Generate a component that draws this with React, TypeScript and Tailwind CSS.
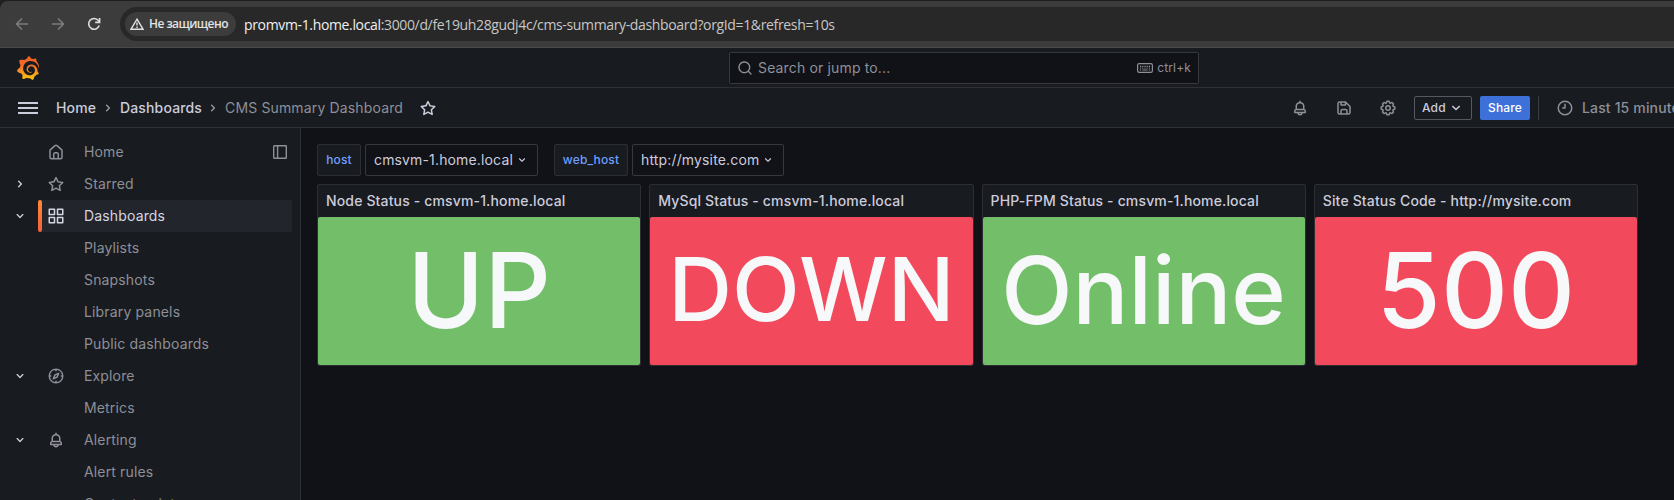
import React from 'react';
import { SiGrafana } from 'react-icons/si';

const ICONS = {
  search:
    'M21.71,20.29,18,16.61A9,9,0,1,0,16.61,18l3.68,3.68a1,1,0,0,0,1.42,0A1,1,0,0,0,21.71,20.29ZM11,18a7,7,0,1,1,7-7A7,7,0,0,1,11,18Z',
  bell: 'M18,13.18V10a6,6,0,0,0-5-5.91V3a1,1,0,0,0-2,0V4.09A6,6,0,0,0,6,10v3.18A3,3,0,0,0,4,16v2a1,1,0,0,0,1,1H8.14a4,4,0,0,0,7.72,0H19a1,1,0,0,0,1-1V16A3,3,0,0,0,18,13.18ZM8,10a4,4,0,0,1,8,0v3H8Zm4,10a2,2,0,0,1-1.72-1h3.44A2,2,0,0,1,12,20Zm6-3H6V16a1,1,0,0,1,1-1H17a1,1,0,0,1,1,1Z',
  down: 'M17,9.17a1,1,0,0,0-1.41,0L12,12.71,8.46,9.17a1,1,0,0,0-1.41,0,1,1,0,0,0,0,1.42l4.24,4.24a1,1,0,0,0,1.42,0L17,10.59A1,1,0,0,0,17,9.17Z',
  right:
    'M14.83,11.29,10.59,7.05a1,1,0,0,0-1.42,0,1,1,0,0,0,0,1.41L12.71,12,9.17,15.54a1,1,0,0,0,0,1.41,1,1,0,0,0,.71.29,1,1,0,0,0,.71-.29l4.24-4.24A1,1,0,0,0,14.83,11.29Z',
  home: 'M20,8h0L14,2.74a3,3,0,0,0-4,0L4,8a3,3,0,0,0-1,2.26V19a3,3,0,0,0,3,3H18a3,3,0,0,0,3-3V10.25A3,3,0,0,0,20,8ZM14,20H10V15a1,1,0,0,1,1-1h2a1,1,0,0,1,1,1Zm5-1a1,1,0,0,1-1,1H16V15a3,3,0,0,0-3-3H11a3,3,0,0,0-3,3v5H6a1,1,0,0,1-1-1V10.25a1,1,0,0,1,.34-.75l6-5.25a1,1,0,0,1,1.32,0l6,5.25a1,1,0,0,1,.34.75Z',
  apps: 'M10,13H3a1,1,0,0,0-1,1v7a1,1,0,0,0,1,1h7a1,1,0,0,0,1-1V14A1,1,0,0,0,10,13ZM9,20H4V15H9ZM21,2H14a1,1,0,0,0-1,1v7a1,1,0,0,0,1,1h7a1,1,0,0,0,1-1V3A1,1,0,0,0,21,2ZM20,9H15V4h5Zm1,4H14a1,1,0,0,0-1,1v7a1,1,0,0,0,1,1h7a1,1,0,0,0,1-1V14A1,1,0,0,0,21,13Zm-1,7H15V15h5ZM10,2H3A1,1,0,0,0,2,3v7a1,1,0,0,0,1,1h7a1,1,0,0,0,1-1V3A1,1,0,0,0,10,2ZM9,9H4V4H9Z',
  compass:
    'M12,2A10,10,0,1,0,22,12,10,10,0,0,0,12,2Zm1,17.93V19a1,1,0,0,0-2,0v.93A8,8,0,0,1,4.07,13H5a1,1,0,0,0,0-2H4.07A8,8,0,0,1,11,4.07V5a1,1,0,0,0,2,0V4.07A8,8,0,0,1,19.93,11H19a1,1,0,0,0,0,2h.93A8,8,0,0,1,13,19.93ZM15.14,7.55l-5,2.12a1,1,0,0,0-.52.52l-2.12,5a1,1,0,0,0,.21,1.1,1,1,0,0,0,.7.3.93.93,0,0,0,.4-.09l5-2.12a1,1,0,0,0,.52-.52l2.12-5a1,1,0,0,0-1.31-1.31Zm-2.49,5.1-2.28,1,1-2.28,2.28-1Z',
  save: 'M20.71,9.29l-6-6a1,1,0,0,0-.32-.21A1.09,1.09,0,0,0,14,3H6A3,3,0,0,0,3,6V18a3,3,0,0,0,3,3H18a3,3,0,0,0,3-3V10A1,1,0,0,0,20.71,9.29ZM9,5h4V7H9Zm6,14H9V16a1,1,0,0,1,1-1h4a1,1,0,0,1,1,1Zm4-1a1,1,0,0,1-1,1H17V16a3,3,0,0,0-3-3H10a3,3,0,0,0-3,3v3H6a1,1,0,0,1-1-1V6A1,1,0,0,1,6,5H7V8A1,1,0,0,0,8,9h6a1,1,0,0,0,1-1V6.41l4,4Z',
  star: 'M22,9.67A1,1,0,0,0,21.14,9l-5.69-.83L12.9,3a1,1,0,0,0-1.8,0L8.55,8.16,2.86,9a1,1,0,0,0-.81.68,1,1,0,0,0,.25,1l4.13,4-1,5.68A1,1,0,0,0,6.9,21.44L12,18.77l5.1,2.67a.93.93,0,0,0,.46.12,1,1,0,0,0,.59-.19,1,1,0,0,0,.4-1l-1-5.68,4.13-4A1,1,0,0,0,22,9.67Zm-6.15,4a1,1,0,0,0-.29.88l.72,4.2-3.76-2a1.06,1.06,0,0,0-.94,0l-3.76,2,.72-4.2a1,1,0,0,0-.29-.88l-3-3,4.21-.61a1,1,0,0,0,.76-.55L12,5.7l1.88,3.82a1,1,0,0,0,.76.55l4.21.61Z',
  clock: 'M12,2A10,10,0,1,0,22,12,10,10,0,0,0,12,2Zm0,18a8,8,0,1,1,8-8A8,8,0,0,1,12,20ZM12,6a1,1,0,0,0-1,1v4H9a1,1,0,0,0,0,2h3a1,1,0,0,0,1-1V7A1,1,0,0,0,12,6Z',
  cog: 'M21.32,9.55l-1.89-.63.89-1.78A1,1,0,0,0,20.13,6L18,3.87a1,1,0,0,0-1.15-.19l-1.78.89-.63-1.89A1,1,0,0,0,13.5,2h-3a1,1,0,0,0-.95.68L8.92,4.57,7.14,3.68A1,1,0,0,0,6,3.87L3.87,6a1,1,0,0,0-.19,1.15l.89,1.78-1.89.63A1,1,0,0,0,2,10.5v3a1,1,0,0,0,.68.95l1.89.63-.89,1.78A1,1,0,0,0,3.87,18L6,20.13a1,1,0,0,0,1.15.19l1.78-.89.63,1.89a1,1,0,0,0,.95.68h3a1,1,0,0,0,.95-.68l.63-1.89,1.78.89A1,1,0,0,0,18,20.13L20.13,18a1,1,0,0,0,.19-1.15l-.89-1.78,1.89-.63A1,1,0,0,0,22,13.5v-3A1,1,0,0,0,21.32,9.55ZM20,12.78l-1.2.4A2,2,0,0,0,17.64,16l.57,1.14-1.1,1.1L16,17.64a2,2,0,0,0-2.79,1.16l-.4,1.2H11.22l-.4-1.2A2,2,0,0,0,8,17.64l-1.14.57-1.1-1.1L6.36,16A2,2,0,0,0,5.2,13.18L4,12.78V11.22l1.2-.4A2,2,0,0,0,6.36,8L5.79,6.89l1.1-1.1L8,6.36A2,2,0,0,0,10.82,5.2l.4-1.2h1.56l.4,1.2A2,2,0,0,0,16,6.36l1.14-.57,1.1,1.1L17.64,8a2,2,0,0,0,1.16,2.79l1.2.4ZM12,8a4,4,0,1,0,4,4A4,4,0,0,0,12,8Zm0,6a2,2,0,1,1,2-2A2,2,0,0,1,12,14Z',
};

type IconName = keyof typeof ICONS;

function Icon({ name, className = 'size-4' }: { name: IconName; className?: string }) {
  return (
    <svg viewBox="0 0 24 24" fill="currentColor" className={`shrink-0 ${className}`}>
      <path d={ICONS[name]} />
    </svg>
  );
}

function BrowserBar() {
  return (
    <div className="h-12 shrink-0 bg-[#1f1f1f] pt-px">
      <div className="flex h-[47px] items-center rounded-tl-lg border-b border-[#4a4a49] bg-[#3c3c3c] pl-[15px]">
        <svg viewBox="0 0 14 14" className="size-3.5 shrink-0 text-[#7c7c7c]" fill="none" stroke="currentColor" strokeWidth="1.6">
          <path d="M13 7H2M7 1.5 1.5 7 7 12.5" />
        </svg>
        <svg viewBox="0 0 14 14" className="ml-[22px] size-3.5 shrink-0 text-[#7c7c7c]" fill="none" stroke="currentColor" strokeWidth="1.6">
          <path d="M1 7h11M7 1.5 12.5 7 7 12.5" />
        </svg>
        <svg viewBox="0 0 14 14" className="ml-[22px] size-3.5 shrink-0 text-[#dedede]" fill="none" stroke="currentColor" strokeWidth="1.6">
          <path d="M12.2 8.6A5.4 5.4 0 1 1 11.4 3.6L12.6 5" />
          <path d="M12.6 1v4.4H8.2" />
        </svg>
        <div className="ml-[19px] flex h-[34px] flex-1 items-center rounded-l-full bg-[#282828] pl-[5px] font-['Open_Sans',sans-serif]">
          <div className="flex h-6 w-[111px] shrink-0 items-center rounded-full bg-[#3c3c3c] pl-[5px]">
            <svg viewBox="0 0 14 12" className="h-3 w-3.5 shrink-0 text-[#e3e3e3]" fill="none" stroke="currentColor" strokeWidth="1.4">
              <path d="M7 1.2 13 11.2H1Z" />
              <path d="M7 4.6v3M7 8.6v1.3" />
            </svg>
            <span className="ml-[5px] text-[12px] font-semibold tracking-[-0.55px] whitespace-nowrap text-[#e3e3e3]">Не защищено</span>
          </div>
          <span className="ml-2 text-[14px] tracking-[-0.35px] whitespace-nowrap text-[#c7c7c7]">
            <span className="text-[#f0f0f0]">promvm-1.home.local</span>
            :3000/d/fe19uh28gudj4c/cms-summary-dashboard?orgId=1&amp;refresh=10s
          </span>
        </div>
      </div>
    </div>
  );
}

function Logo() {
  return (
    <div className="flex w-6 items-center">
      <svg className="absolute size-0">
        <defs>
          <linearGradient id="flame" x1="0" y1="0" x2="0" y2="1">
            <stop offset="0" stopColor="#f05a28" />
            <stop offset="0.45" stopColor="#f5732a" />
            <stop offset="1" stopColor="#fbca0a" />
          </linearGradient>
        </defs>
      </svg>
      <SiGrafana className="size-6" style={{ fill: 'url(#flame)' }} />
    </div>
  );
}

function TopBar() {
  return (
    <div className="flex h-10 shrink-0 items-center border-b border-[#2e3035] bg-[#181b1f] pl-4">
      <Logo />
      <div className="ml-[689px] flex h-8 w-[470px] items-center rounded-[2px] border border-[#36383d] bg-[#111217] pr-[7px] pl-[7px] text-[#8e8f98]">
        <Icon name="search" />
        <span className="ml-[5px] flex-1 text-sm tracking-[0.15px]">Search or jump to...</span>
        <svg viewBox="0 0 16 10" className="h-2.5 w-4" fill="none" stroke="currentColor">
          <rect x="0.6" y="0.6" width="14.8" height="8.8" rx="1.6" strokeWidth="1.2" />
          <path d="M3 3.3h10" strokeWidth="1.2" strokeDasharray="1.2 1" />
          <path d="M3 5.1h10" strokeWidth="1" strokeDasharray="1.2 1" />
          <path d="M2.8 7h1.4M5.5 7h5M11.8 7h1.4" strokeWidth="1.2" />
        </svg>
        <span className="ml-1 text-xs tracking-[0.15px]">ctrl+k</span>
      </div>
    </div>
  );
}

function NavBar() {
  return (
    <div className="flex h-10 shrink-0 items-center overflow-hidden border-b border-[#2e3035] bg-[#181b1f] pl-[18px] text-sm tracking-[0.15px] whitespace-nowrap text-[#ccccdc]">
      <div className="flex w-5 shrink-0 flex-col gap-[3px]">
        <div className="h-0.5 bg-[#ccccdc]" />
        <div className="h-0.5 bg-[#ccccdc]" />
        <div className="h-0.5 bg-[#ccccdc]" />
      </div>
      <span className="ml-[18px] w-10 shrink-0 font-medium">Home</span>
      <Icon name="right" className="ml-1 size-4 text-[#9a9ba6]" />
      <span className="ml-1 w-[82px] shrink-0 font-medium">Dashboards</span>
      <Icon name="right" className="ml-[3px] size-4 text-[#9a9ba6]" />
      <span className="ml-1 w-[179px] shrink-0 text-[#8e8f98]">CMS Summary Dashboard</span>
      <Icon name="star" className="ml-[15px] size-[18px]" />
      <div className="ml-[854px] flex shrink-0 items-center text-[#8e8f98]">
        <Icon name="bell" className="size-[18px]" />
        <Icon name="save" className="ml-[26px] size-[18px]" />
        <Icon name="cog" className="ml-[26px] size-[18px]" />
      </div>
      <div className="ml-[17px] flex h-6 w-[58px] shrink-0 items-center rounded-[2px] border border-[#56575f] pl-[7px] text-xs font-medium">
        Add
        <Icon name="down" className="ml-px size-[18px]" />
      </div>
      <div className="ml-2 flex h-6 w-[50px] shrink-0 items-center justify-center rounded-[2px] bg-[#3d71d9] text-xs font-medium text-white">Share</div>
      <div className="ml-2 h-6 w-px shrink-0 bg-[#3b3d43]" />
      <Icon name="clock" className="ml-[17px] size-[18px] text-[#8e8f98]" />
      <span className="ml-2 shrink-0 font-medium text-[#8e8f98]">Last 15 minutes</span>
    </div>
  );
}

type NavItem = { label: string; icon?: IconName; arrow?: 'down' | 'right'; active?: boolean; dock?: boolean };

const NAV: NavItem[] = [
  { label: 'Home', icon: 'home', dock: true },
  { label: 'Starred', icon: 'star', arrow: 'right' },
  { label: 'Dashboards', icon: 'apps', arrow: 'down', active: true },
  { label: 'Playlists' },
  { label: 'Snapshots' },
  { label: 'Library panels' },
  { label: 'Public dashboards' },
  { label: 'Explore', icon: 'compass', arrow: 'down' },
  { label: 'Metrics' },
  { label: 'Alerting', icon: 'bell', arrow: 'down' },
  { label: 'Alert rules' },
  { label: 'Contact points' },
];

function NavRow({ item }: { item: NavItem }) {
  return (
    <div className="flex h-8 shrink-0 items-center pr-2 pl-3 text-sm tracking-[0.15px]">
      <div className="w-[26px] shrink-0 text-[#ccccdc]">{item.arrow && <Icon name={item.arrow} />}</div>
      <div className={`flex h-8 flex-1 items-center rounded-[2px] ${item.active ? 'bg-[#22252b] text-[#d5d5e3]' : 'text-[#8e8f98]'}`}>
        <div className={`h-8 w-1 rounded-[2px] ${item.active ? 'bg-linear-to-b from-[#ff8833] to-[#f55f3e]' : ''}`} />
        <div className="ml-[5px] w-[37px]">{item.icon && <Icon name={item.icon} className="size-[18px]" />}</div>
        <span className="flex-1">{item.label}</span>
        {item.dock && (
          <svg viewBox="0 0 14 14" className="mr-[5px] size-3.5" fill="none" stroke="currentColor" strokeWidth="1.4">
            <rect x="0.7" y="0.7" width="12.6" height="12.6" rx="0.6" />
            <path d="M4.6 1v12" />
          </svg>
        )}
      </div>
    </div>
  );
}

function Variable({ name, value, labelClass, valueClass }: { name: string; value: string; labelClass: string; valueClass: string }) {
  return (
    <div className="flex gap-1">
      <div className={`flex h-8 items-center justify-center rounded-[2px] border border-[#2c2e33] bg-[#181b1f] text-xs font-medium tracking-[0.15px] text-[#6e9fff] ${labelClass}`}>
        {name}
      </div>
      <div className={`flex h-8 items-center rounded-[2px] border border-[#36383d] bg-[#111217] pl-2 text-sm tracking-[0.15px] text-[#ccccdc] ${valueClass}`}>
        {value}
        <Icon name="down" className="ml-0.5 size-3.5" />
      </div>
    </div>
  );
}

const PANELS = [
  { title: 'Node Status - cmsvm-1.home.local', value: 'UP', color: 'bg-[#73bf69]', size: 'pb-0.5 text-[104px]' },
  { title: 'MySql Status - cmsvm-1.home.local', value: 'DOWN', color: 'bg-[#f2495c]', size: 'pb-[3px] text-[88.4px]' },
  { title: 'PHP-FPM Status - cmsvm-1.home.local', value: 'Online', color: 'bg-[#73bf69]', size: 'pb-0.5 text-[93px]' },
  { title: 'Site Status Code - http://mysite.com', value: '500', color: 'bg-[#f2495c]', size: 'pb-0.5 text-[104px]' },
];

export default function App() {
  return (
    <div className="flex h-[500px] w-[1674px] flex-col overflow-hidden bg-[#111217] font-['Inter',sans-serif]">
      <BrowserBar />
      <TopBar />
      <NavBar />
      <div className="flex min-h-0 flex-1">
        <nav className="flex w-[301px] shrink-0 flex-col overflow-hidden border-r border-[#2e3035] bg-[#181b1f] pt-2">
          {NAV.map((item) => (
            <NavRow key={item.label} item={item} />
          ))}
        </nav>
        <main className="flex flex-1 flex-col pt-4 pr-9 pl-4">
          <div className="flex gap-4">
            <Variable name="host" value="cmsvm-1.home.local" labelClass="w-11" valueClass="w-[173px]" />
            <Variable name="web_host" value="http://mysite.com" labelClass="w-[74px]" valueClass="w-[152px]" />
          </div>
          <div className="mt-2 grid grid-cols-4 gap-2">
            {PANELS.map((p) => (
              <section key={p.title} className="flex h-[182px] flex-col rounded-[2px] border border-[#2c2e33] bg-[#181b1f]">
                <h2 className="flex h-8 shrink-0 items-center px-2 text-sm font-medium tracking-[0.15px] text-[#ccccdc]">{p.title}</h2>
                <div className={`flex flex-1 items-center justify-center rounded-[2px] leading-none font-medium text-[#f7f8fa] ${p.color} ${p.size}`}>
                  {p.value}
                </div>
              </section>
            ))}
          </div>
        </main>
      </div>
    </div>
  );
}
